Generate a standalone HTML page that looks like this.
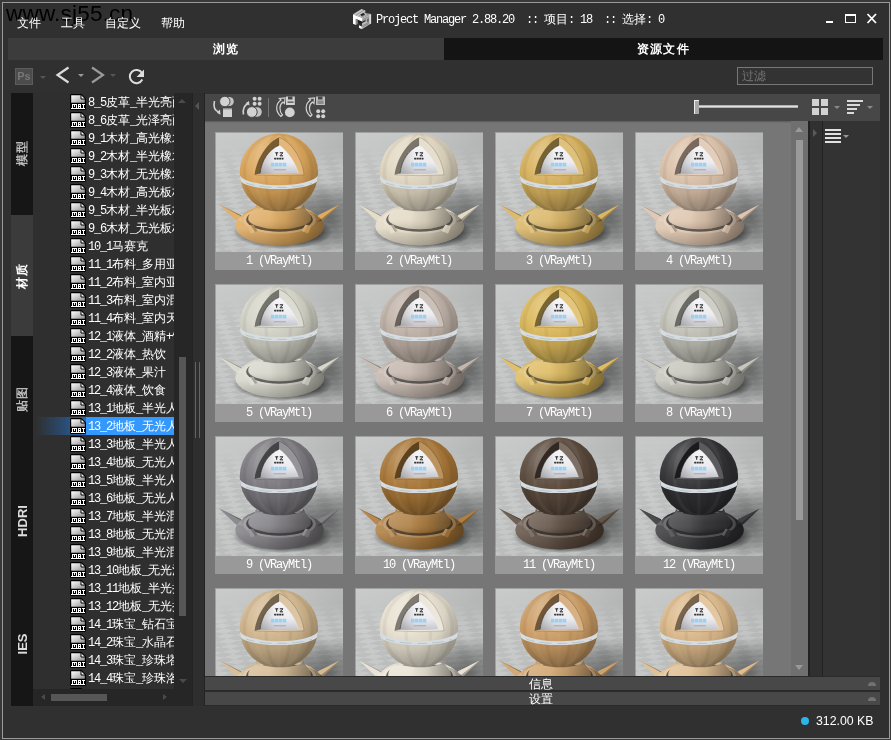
<!DOCTYPE html><html><head><meta charset="utf-8"><title>Project Manager</title><style>
*{margin:0;padding:0;box-sizing:border-box}
html,body{width:891px;height:740px;overflow:hidden;background:#393939}
body{font-family:"Liberation Sans",sans-serif;font-size:12px;color:#fff;position:relative}
.abs,.frame *{position:absolute}
.frame{position:absolute;left:2px;top:2px;width:888px;height:737px;border:1px solid #9a9a9a;background:#303030}
/* inner coordinates are page coords minus 3 -> use wrapper */
.pg{position:absolute;left:-3px;top:-3px;width:891px;height:740px;will-change:transform}
span.l,span.c{position:static}
.l{font-family:"Liberation Mono",monospace;font-size:12px;letter-spacing:-1.2px}
.c{font-family:"Liberation Sans",sans-serif;font-size:12px;letter-spacing:0}
.wm{left:6px;top:1px;font-size:22.5px;letter-spacing:.2px;color:#000;line-height:26px;white-space:nowrap}
.menu{top:16px;height:14px;line-height:14px;font-size:12px;color:#fff;white-space:nowrap}
.title{left:376px;top:11px;height:16px;line-height:16px;white-space:nowrap;color:#fff}
.tab{top:38px;height:22px;line-height:22px;text-align:center;font-weight:bold;font-size:12px;color:#fff;letter-spacing:1.2px}
.row{left:33px;width:141px;height:18px;white-space:nowrap;overflow:hidden}
.row .txt{left:55px;top:0;height:18px;line-height:17px;white-space:nowrap;color:#fff}
.row svg{left:37px;top:0}
.vt{left:11px;width:22px;color:#fff;font-weight:bold;font-size:12px}
.vt span{position:absolute;left:50%;top:50%;white-space:nowrap;transform:translate(-50%,-50%) rotate(-90deg);}
.th{width:128px;height:138px;overflow:hidden}
.th svg{left:0;top:0}
.th .lb{left:0;top:120px;width:128px;height:18px;background:#999;text-align:center;line-height:17px;color:#fff;white-space:nowrap}
</style></head><body>
<div class="frame"><div class="pg">
<div class="wm">www.sj55.cn</div>
<div class="menu" style="left:17px">文件</div>
<div class="menu" style="left:61px">工具</div>
<div class="menu" style="left:105px">自定义</div>
<div class="menu" style="left:161px">帮助</div>
<svg style="left:350px;top:6px" width="26" height="26" viewBox="0 0 740 740"><path d="M85 235 L330 85 L435 125 L435 205 L600 225 L345 340Z" fill="#c6c6c6"/><path d="M160 268 L400 118 M235 298 L440 170 M300 322 L560 215" stroke="#6a6a6a" stroke-width="16" fill="none"/><path d="M295 238 L395 196 L425 248 L330 290Z" fill="#222"/><path d="M345 340 L600 225 L600 495 L335 660 L335 580 L345 500Z" fill="#bcbcbc"/><path d="M365 385 L545 300 M365 425 L470 375 M350 600 L590 480 M350 560 L590 445" stroke="#5a5a5a" stroke-width="15" fill="none"/><path d="M480 372 L540 345 L540 440 L480 467Z" fill="#6a6a6a"/><path d="M552 247 L600 225 L600 495 L552 520Z" fill="#dadada"/><path d="M225 395 L345 445 L445 398 L445 432 L300 505 L225 472Z" fill="#1e1e1e"/><path d="M85 235 L345 340 L345 440 L165 365 L165 540 L85 505Z" fill="#fff"/><path d="M170 368 L220 390 L220 512 L170 538Z" fill="#8c8c8c"/><path d="M255 545 L335 580 L335 660 L255 620Z" fill="#fff"/></svg>
<div class="title"><span class="l">Project&nbsp;Manager&nbsp;2.88.20&nbsp;&nbsp;::&nbsp;</span><span class="c">项目</span><span class="l">:&nbsp;18&nbsp;&nbsp;::&nbsp;</span><span class="c">选择</span><span class="l">:&nbsp;0</span></div>
<div style="left:826px;top:21px;width:7px;height:2px;background:#fff"></div>
<div style="left:845px;top:14px;width:11px;height:9px;border:1.5px solid #fff;border-top-width:2.5px"></div>
<svg style="left:866px;top:13px" width="12" height="11" viewBox="0 0 12 11"><path d="M1.5 1 L10 10 M10 1 L1.5 10" stroke="#fff" stroke-width="1.8" fill="none"/></svg>
<div class="tab" style="left:8px;width:436px;background:#3c3c3c">浏览</div>
<div class="tab" style="left:444px;width:439px;background:#141414">资源文件</div>
<div style="left:15px;top:68px;width:18px;height:17px;background:#4c4c4c;border:1px solid #5c5c5c;color:#777;font-size:11px;line-height:15px;text-align:center;font-weight:bold">Ps</div>
<div style="left:39.5px;top:75.75px;width:0;height:0;border-left:3px solid transparent;border-right:3px solid transparent;border-top:3.5px solid #555"></div>
<svg style="left:54px;top:64px" width="100" height="24" viewBox="54 64 100 24" fill="none"><path d="M68.5 67.5 L57.5 75 L68.5 82.5" stroke="#dcdcdc" stroke-width="2.2"/><path d="M92 67.5 L103 75 L92 82.5" stroke="#9a9a9a" stroke-width="2.2"/><path d="M142 73 A6.6 6.6 0 1 0 142.3 79.5" stroke="#dedede" stroke-width="2"/><path d="M144 69.5 V77 H136.5 Z" fill="#dedede"/></svg>
<div style="left:77.5px;top:73.75px;width:0;height:0;border-left:3px solid transparent;border-right:3px solid transparent;border-top:3.5px solid #999"></div>
<div style="left:109.5px;top:73.75px;width:0;height:0;border-left:3px solid transparent;border-right:3px solid transparent;border-top:3.5px solid #555"></div>
<div style="left:737px;top:67px;width:136px;height:18px;border:1px solid #777;background:#333;color:#777;font-size:12px;line-height:16px;padding-left:4px">过滤</div>
<div style="left:11px;top:93px;width:22px;height:613px;background:#161616"></div>
<div style="left:11px;top:215px;width:22px;height:121px;background:#3b3b3b"></div>
<div class="vt" style="top:91px;height:123px;color:#bbb;letter-spacing:1px"><span>模型</span></div>
<div class="vt" style="top:215px;height:122px;color:#fff;letter-spacing:1px"><span>材质</span></div>
<div class="vt" style="top:338px;height:122px;color:#bbb;letter-spacing:1px"><span>贴图</span></div>
<div class="vt" style="top:460px;height:121px;color:#ddd;font-size:13px"><span>HDRI</span></div>
<div class="vt" style="top:582px;height:123px;color:#ddd;font-size:13px"><span>IES</span></div>
<div style="left:33px;top:93px;width:141px;height:596px;background:#2f2f2f"></div>
<div style="left:33px;top:417px;width:53px;height:18px;background:linear-gradient(90deg,rgba(51,153,255,0) 5%,rgba(38,100,170,0.55) 60%,rgba(38,110,190,0.9) 100%)"></div>
<div style="left:86px;top:417px;width:88px;height:18px;background:#3399ff"></div>
<div class="row" style="top:94px;height:18px"><svg width="16" height="16"><use href="#mat"/></svg><div class="txt"><span class="l">8_5</span><span class="c">皮革</span><span class="l">_</span><span class="c">半光亮面</span></div></div>
<div class="row" style="top:112px;height:18px"><svg width="16" height="16"><use href="#mat"/></svg><div class="txt"><span class="l">8_6</span><span class="c">皮革</span><span class="l">_</span><span class="c">光泽亮面</span></div></div>
<div class="row" style="top:130px;height:18px"><svg width="16" height="16"><use href="#mat"/></svg><div class="txt"><span class="l">9_1</span><span class="c">木材</span><span class="l">_</span><span class="c">高光橡木</span></div></div>
<div class="row" style="top:148px;height:18px"><svg width="16" height="16"><use href="#mat"/></svg><div class="txt"><span class="l">9_2</span><span class="c">木材</span><span class="l">_</span><span class="c">半光橡木</span></div></div>
<div class="row" style="top:166px;height:18px"><svg width="16" height="16"><use href="#mat"/></svg><div class="txt"><span class="l">9_3</span><span class="c">木材</span><span class="l">_</span><span class="c">无光橡木</span></div></div>
<div class="row" style="top:184px;height:18px"><svg width="16" height="16"><use href="#mat"/></svg><div class="txt"><span class="l">9_4</span><span class="c">木材</span><span class="l">_</span><span class="c">高光板材</span></div></div>
<div class="row" style="top:202px;height:18px"><svg width="16" height="16"><use href="#mat"/></svg><div class="txt"><span class="l">9_5</span><span class="c">木材</span><span class="l">_</span><span class="c">半光板材</span></div></div>
<div class="row" style="top:220px;height:18px"><svg width="16" height="16"><use href="#mat"/></svg><div class="txt"><span class="l">9_6</span><span class="c">木材</span><span class="l">_</span><span class="c">无光板材</span></div></div>
<div class="row" style="top:238px;height:18px"><svg width="16" height="16"><use href="#mat"/></svg><div class="txt"><span class="l">10_1</span><span class="c">马赛克</span></div></div>
<div class="row" style="top:256px;height:18px"><svg width="16" height="16"><use href="#mat"/></svg><div class="txt"><span class="l">11_1</span><span class="c">布料</span><span class="l">_</span><span class="c">多用亚麻</span></div></div>
<div class="row" style="top:274px;height:18px"><svg width="16" height="16"><use href="#mat"/></svg><div class="txt"><span class="l">11_2</span><span class="c">布料</span><span class="l">_</span><span class="c">室内亚麻</span></div></div>
<div class="row" style="top:292px;height:18px"><svg width="16" height="16"><use href="#mat"/></svg><div class="txt"><span class="l">11_3</span><span class="c">布料</span><span class="l">_</span><span class="c">室内混纺</span></div></div>
<div class="row" style="top:310px;height:18px"><svg width="16" height="16"><use href="#mat"/></svg><div class="txt"><span class="l">11_4</span><span class="c">布料</span><span class="l">_</span><span class="c">室内天鹅</span></div></div>
<div class="row" style="top:328px;height:18px"><svg width="16" height="16"><use href="#mat"/></svg><div class="txt"><span class="l">12_1</span><span class="c">液体</span><span class="l">_</span><span class="c">酒精</span><span class="l">+</span><span class="c">饮料</span></div></div>
<div class="row" style="top:346px;height:18px"><svg width="16" height="16"><use href="#mat"/></svg><div class="txt"><span class="l">12_2</span><span class="c">液体</span><span class="l">_</span><span class="c">热饮</span></div></div>
<div class="row" style="top:364px;height:18px"><svg width="16" height="16"><use href="#mat"/></svg><div class="txt"><span class="l">12_3</span><span class="c">液体</span><span class="l">_</span><span class="c">果汁</span></div></div>
<div class="row" style="top:382px;height:18px"><svg width="16" height="16"><use href="#mat"/></svg><div class="txt"><span class="l">12_4</span><span class="c">液体</span><span class="l">_</span><span class="c">饮食</span></div></div>
<div class="row" style="top:400px;height:18px"><svg width="16" height="16"><use href="#mat"/></svg><div class="txt"><span class="l">13_1</span><span class="c">地板</span><span class="l">_</span><span class="c">半光人字</span></div></div>
<div class="row" style="top:418px;height:18px"><svg width="16" height="16"><use href="#mat"/></svg><div class="txt"><span class="l">13_2</span><span class="c">地板</span><span class="l">_</span><span class="c">无光人字</span></div></div>
<div class="row" style="top:436px;height:18px"><svg width="16" height="16"><use href="#mat"/></svg><div class="txt"><span class="l">13_3</span><span class="c">地板</span><span class="l">_</span><span class="c">半光人字</span></div></div>
<div class="row" style="top:454px;height:18px"><svg width="16" height="16"><use href="#mat"/></svg><div class="txt"><span class="l">13_4</span><span class="c">地板</span><span class="l">_</span><span class="c">无光人字</span></div></div>
<div class="row" style="top:472px;height:18px"><svg width="16" height="16"><use href="#mat"/></svg><div class="txt"><span class="l">13_5</span><span class="c">地板</span><span class="l">_</span><span class="c">半光人字</span></div></div>
<div class="row" style="top:490px;height:18px"><svg width="16" height="16"><use href="#mat"/></svg><div class="txt"><span class="l">13_6</span><span class="c">地板</span><span class="l">_</span><span class="c">无光人字</span></div></div>
<div class="row" style="top:508px;height:18px"><svg width="16" height="16"><use href="#mat"/></svg><div class="txt"><span class="l">13_7</span><span class="c">地板</span><span class="l">_</span><span class="c">半光混拼</span></div></div>
<div class="row" style="top:526px;height:18px"><svg width="16" height="16"><use href="#mat"/></svg><div class="txt"><span class="l">13_8</span><span class="c">地板</span><span class="l">_</span><span class="c">无光混拼</span></div></div>
<div class="row" style="top:544px;height:18px"><svg width="16" height="16"><use href="#mat"/></svg><div class="txt"><span class="l">13_9</span><span class="c">地板</span><span class="l">_</span><span class="c">半光混拼</span></div></div>
<div class="row" style="top:562px;height:18px"><svg width="16" height="16"><use href="#mat"/></svg><div class="txt"><span class="l">13_10</span><span class="c">地板</span><span class="l">_</span><span class="c">无光混拼</span></div></div>
<div class="row" style="top:580px;height:18px"><svg width="16" height="16"><use href="#mat"/></svg><div class="txt"><span class="l">13_11</span><span class="c">地板</span><span class="l">_</span><span class="c">半光拼花</span></div></div>
<div class="row" style="top:598px;height:18px"><svg width="16" height="16"><use href="#mat"/></svg><div class="txt"><span class="l">13_12</span><span class="c">地板</span><span class="l">_</span><span class="c">无光拼花</span></div></div>
<div class="row" style="top:616px;height:18px"><svg width="16" height="16"><use href="#mat"/></svg><div class="txt"><span class="l">14_1</span><span class="c">珠宝</span><span class="l">_</span><span class="c">钻石宝石</span></div></div>
<div class="row" style="top:634px;height:18px"><svg width="16" height="16"><use href="#mat"/></svg><div class="txt"><span class="l">14_2</span><span class="c">珠宝</span><span class="l">_</span><span class="c">水晶石</span></div></div>
<div class="row" style="top:652px;height:18px"><svg width="16" height="16"><use href="#mat"/></svg><div class="txt"><span class="l">14_3</span><span class="c">珠宝</span><span class="l">_</span><span class="c">珍珠塔</span></div></div>
<div class="row" style="top:670px;height:18px"><svg width="16" height="16"><use href="#mat"/></svg><div class="txt"><span class="l">14_4</span><span class="c">珠宝</span><span class="l">_</span><span class="c">珍珠洛</span></div></div>
<div class="row" style="top:688px;height:1px"><svg width="16" height="16"><use href="#mat"/></svg><div class="txt"><span class="l">14_5</span><span class="c">珠宝</span><span class="l">_</span><span class="c">黄金</span></div></div>
<div style="left:174px;top:93px;width:18px;height:596px;background:#262626"></div>
<div style="left:179px;top:357px;width:7px;height:259px;background:#565656"></div>
<div style="left:178px;top:99px;width:0;height:0;border-left:4px solid transparent;border-right:4px solid transparent;border-bottom:4px solid #4a4a4a"></div>
<div style="left:179px;top:679px;width:0;height:0;border-left:4px solid transparent;border-right:4px solid transparent;border-top:4px solid #4a4a4a"></div>
<div style="left:33px;top:689px;width:159px;height:17px;background:#262626"></div>
<div style="left:51px;top:694px;width:56px;height:7px;background:#565656"></div>
<div style="left:41px;top:694px;width:0;height:0;border-top:3.5px solid transparent;border-bottom:3.5px solid transparent;border-right:4px solid #4a4a4a"></div>
<div style="left:163px;top:694px;width:0;height:0;border-top:3.5px solid transparent;border-bottom:3.5px solid transparent;border-left:4px solid #4a4a4a"></div>
<div style="left:192px;top:93px;width:1px;height:613px;background:#232323"></div>
<div style="left:193px;top:93px;width:11px;height:613px;background:#2e2e2e"></div>
<div style="left:204px;top:93px;width:1px;height:613px;background:#232323"></div>
<div style="left:195px;top:362px;width:1px;height:76px;background:#636363"></div>
<div style="left:199px;top:362px;width:1px;height:76px;background:#636363"></div>
<div style="left:195px;top:102px;width:0;height:0;border-top:4px solid transparent;border-bottom:4px solid transparent;border-right:4px solid #555"></div>
<div style="left:205px;top:94px;width:675px;height:27px;background:#474747"></div>
<div style="left:205px;top:121px;width:603px;height:555px;background:#767676"></div>
<div style="left:205px;top:121px;width:603px;height:2px;background:linear-gradient(#5a5a5a,#767676)"></div>
<div id="tv" style="left:205px;top:123px;width:586px;height:553px;overflow:hidden">
<div class="th" style="left:10px;top:9px"><svg width="128" height="120" viewBox="0 0 128 120" style="--c:#dca65a"><use href="#bg"/><use href="#ball"/></svg><div class="lb"><span class="l">1&nbsp;(VRayMtl)</span></div></div>
<div class="th" style="left:150px;top:9px"><svg width="128" height="120" viewBox="0 0 128 120" style="--c:#e2d8c2"><use href="#bg"/><use href="#ball"/></svg><div class="lb"><span class="l">2&nbsp;(VRayMtl)</span></div></div>
<div class="th" style="left:290px;top:9px"><svg width="128" height="120" viewBox="0 0 128 120" style="--c:#d8b25e"><use href="#bg"/><use href="#ball"/></svg><div class="lb"><span class="l">3&nbsp;(VRayMtl)</span></div></div>
<div class="th" style="left:430px;top:9px"><svg width="128" height="120" viewBox="0 0 128 120" style="--c:#dcc2aa"><use href="#bg"/><use href="#ball"/></svg><div class="lb"><span class="l">4&nbsp;(VRayMtl)</span></div></div>
<div class="th" style="left:10px;top:161px"><svg width="128" height="120" viewBox="0 0 128 120" style="--c:#d4d4c8"><use href="#bg"/><use href="#ball"/></svg><div class="lb"><span class="l">5&nbsp;(VRayMtl)</span></div></div>
<div class="th" style="left:150px;top:161px"><svg width="128" height="120" viewBox="0 0 128 120" style="--c:#c0b2a8"><use href="#bg"/><use href="#ball"/></svg><div class="lb"><span class="l">6&nbsp;(VRayMtl)</span></div></div>
<div class="th" style="left:290px;top:161px"><svg width="128" height="120" viewBox="0 0 128 120" style="--c:#dcb85a"><use href="#bg"/><use href="#ball"/></svg><div class="lb"><span class="l">7&nbsp;(VRayMtl)</span></div></div>
<div class="th" style="left:430px;top:161px"><svg width="128" height="120" viewBox="0 0 128 120" style="--c:#c3c3b9"><use href="#bg"/><use href="#ball"/></svg><div class="lb"><span class="l">8&nbsp;(VRayMtl)</span></div></div>
<div class="th" style="left:10px;top:313px"><svg width="128" height="120" viewBox="0 0 128 120" style="--c:#7c7a7f"><use href="#bg"/><use href="#ball"/></svg><div class="lb"><span class="l">9&nbsp;(VRayMtl)</span></div></div>
<div class="th" style="left:150px;top:313px"><svg width="128" height="120" viewBox="0 0 128 120" style="--c:#aa7838"><use href="#bg"/><use href="#ball"/></svg><div class="lb"><span class="l">10&nbsp;(VRayMtl)</span></div></div>
<div class="th" style="left:290px;top:313px"><svg width="128" height="120" viewBox="0 0 128 120" style="--c:#5c4b3e"><use href="#bg"/><use href="#ball"/></svg><div class="lb"><span class="l">11&nbsp;(VRayMtl)</span></div></div>
<div class="th" style="left:430px;top:313px"><svg width="128" height="120" viewBox="0 0 128 120" style="--c:#323235"><use href="#bg"/><use href="#ball"/></svg><div class="lb"><span class="l">12&nbsp;(VRayMtl)</span></div></div>
<div class="th" style="left:10px;top:465px"><svg width="128" height="120" viewBox="0 0 128 120" style="--c:#d2b78e"><use href="#bg"/><use href="#ball"/></svg><div class="lb"><span class="l">13&nbsp;(VRayMtl)</span></div></div>
<div class="th" style="left:150px;top:465px"><svg width="128" height="120" viewBox="0 0 128 120" style="--c:#e8e1d1"><use href="#bg"/><use href="#ball"/></svg><div class="lb"><span class="l">14&nbsp;(VRayMtl)</span></div></div>
<div class="th" style="left:290px;top:465px"><svg width="128" height="120" viewBox="0 0 128 120" style="--c:#cd9e66"><use href="#bg"/><use href="#ball"/></svg><div class="lb"><span class="l">15&nbsp;(VRayMtl)</span></div></div>
<div class="th" style="left:430px;top:465px"><svg width="128" height="120" viewBox="0 0 128 120" style="--c:#dcb98a"><use href="#bg"/><use href="#ball"/></svg><div class="lb"><span class="l">16&nbsp;(VRayMtl)</span></div></div>
</div>
<div style="left:791px;top:121px;width:17px;height:555px;background:#6f6f6f"></div>
<div style="left:796px;top:140px;width:7px;height:380px;background:#9a9a9a"></div>
<div style="left:795px;top:127px;width:0;height:0;border-left:4.5px solid transparent;border-right:4.5px solid transparent;border-bottom:5px solid #999"></div>
<div style="left:795px;top:665px;width:0;height:0;border-left:4.5px solid transparent;border-right:4.5px solid transparent;border-top:5px solid #999"></div>
<div style="left:808px;top:121px;width:2px;height:555px;background:#222"></div>
<div style="left:810px;top:121px;width:12px;height:555px;background:#303030"></div>
<div style="left:822px;top:121px;width:1px;height:555px;background:#222"></div>
<div style="left:823px;top:121px;width:57px;height:555px;background:#333"></div>
<div style="left:813px;top:129px;width:0;height:0;border-top:4.5px solid transparent;border-bottom:4.5px solid transparent;border-left:4.5px solid #5a5a5a"></div>
<div style="left:825px;top:129px;width:16px;height:2px;background:#e2e2e2"></div>
<div style="left:825px;top:133px;width:16px;height:2px;background:#e2e2e2"></div>
<div style="left:825px;top:137px;width:16px;height:2px;background:#e2e2e2"></div>
<div style="left:825px;top:141px;width:16px;height:2px;background:#e2e2e2"></div>
<div style="left:842.5px;top:134.75px;width:0;height:0;border-left:3px solid transparent;border-right:3px solid transparent;border-top:3.5px solid #999"></div>
<div style="left:812px;top:99px;width:7px;height:7px;background:#d2d2d2"></div>
<div style="left:812px;top:108px;width:7px;height:7px;background:#d2d2d2"></div>
<div style="left:821px;top:99px;width:7px;height:7px;background:#d2d2d2"></div>
<div style="left:821px;top:108px;width:7px;height:7px;background:#d2d2d2"></div>
<div style="left:833.5px;top:105.75px;width:0;height:0;border-left:3px solid transparent;border-right:3px solid transparent;border-top:3.5px solid #8a8a8a"></div>
<div style="left:847px;top:100px;width:16px;height:2px;background:#dadada"></div>
<div style="left:847px;top:104px;width:13px;height:2px;background:#dadada"></div>
<div style="left:847px;top:108px;width:10px;height:2px;background:#dadada"></div>
<div style="left:847px;top:112px;width:7px;height:2px;background:#dadada"></div>
<div style="left:866.5px;top:105.75px;width:0;height:0;border-left:3px solid transparent;border-right:3px solid transparent;border-top:3.5px solid #8a8a8a"></div>
<div style="left:699px;top:105px;width:99px;height:3px;background:linear-gradient(#9a9a9a,#e0e0e0 50%,#9a9a9a)"></div>
<div style="left:694px;top:100px;width:5px;height:14px;background:#a8a8a8;border-left:1px solid #eee;border-top:1px solid #eee"></div>
<svg style="left:205px;top:94px" width="130" height="27" viewBox="205 94 130 27" fill="none">
<g stroke="#d2d2d2" stroke-width="1.6"><path d="M214.5 101 C213 107 215 111 219.5 112.5"/><path d="M243.5 114.5 C242.5 109 244 105.5 248 103.5"/></g>
<path d="M220.5 114.8 L216.8 112.8 L220 109.5Z M249 101 L249.5 105.6 L245.5 103.3Z" fill="#d2d2d2"/>
<circle cx="229.2" cy="101.5" r="4.6" fill="#c4c4c4"/><circle cx="224.8" cy="101.5" r="5.2" fill="#d2d2d2" stroke="#474747" stroke-width="1"/>
<rect x="223" y="108.5" width="9" height="8.5" fill="#d2d2d2"/><path d="M223 108.5 h9 v1.5 h-9z" fill="#9c9c9c" opacity=".5"/>
<g fill="#d2d2d2"><circle cx="254.6" cy="98.8" r="2"/><circle cx="259.6" cy="98.8" r="2"/><circle cx="254.6" cy="103.8" r="2"/><circle cx="259.6" cy="103.8" r="2"/></g>
<circle cx="257" cy="112" r="4.8" fill="#c4c4c4"/><circle cx="251.8" cy="112" r="5.4" fill="#d2d2d2" stroke="#474747" stroke-width="1"/>
<path d="M268.5 98 V117" stroke="#767676" stroke-width="1"/>
<g stroke="#d2d2d2" stroke-width="1.2" transform="translate(-1.5 0)"><path d="M282.5 116.5 C277 112 276.5 104 282.5 100 L281 98.5 L286.5 98 L286 103.5 L284.5 102 C280.5 105 280.5 111 284 115Z"/><path d="M312 116.5 C306.500 112 306 104 312 100 L310.500 98.500 L316 98 L315.500 103.500 L314 102 C310 105 310 111 313.500 115Z"/></g>
<path d="M286 96.500 h8.800 v8.500 h-8.800z" fill="#d2d2d2"/><path d="M288 96.500 h4.500 v3 h-4.500z M287.5 101.5 h6 v1.200 h-6z" fill="#474747"/>
<circle cx="289.800" cy="112.400" r="4.900" fill="#d2d2d2"/>
<path d="M316 96.500 h9 v8.500 h-9z" fill="#bdbdbd"/><path d="M318 96.500 h4.500 v3 h-4.500z" fill="#474747"/><path d="M317.5 100.500 h6 v3.500 h-6z" fill="#8a8a8a"/>
<g fill="#d2d2d2"><circle cx="318.200" cy="111.200" r="2"/><circle cx="323.200" cy="111.200" r="2"/><circle cx="318.200" cy="116.200" r="2"/><circle cx="323.200" cy="116.200" r="2"/></g>
</svg>
<div style="left:205px;top:676px;width:675px;height:30px;background:#2a2a2a"></div>
<div style="left:205px;top:677px;width:675px;height:13px;background:#484848"></div>
<div style="left:205px;top:692px;width:675px;height:13px;background:#484848"></div>
<div style="left:529px;top:677px;height:14px;line-height:14px;font-size:12px;color:#fff;white-space:nowrap">信息</div>
<div style="left:529px;top:692px;height:14px;line-height:14px;font-size:12px;color:#fff;white-space:nowrap">设置</div>
<div style="left:867.5px;top:682px;width:8.5px;height:4px;background:#717171;border-radius:5px 5px 0 0"></div>
<div style="left:867.5px;top:697px;width:8.5px;height:4px;background:#717171;border-radius:5px 5px 0 0"></div>
<div style="left:800.5px;top:716.5px;width:8.5px;height:8.5px;border-radius:50%;background:#2db5e8"></div>
<div style="left:816px;top:714px;height:14px;line-height:14px;font-size:12.3px;color:#fff;white-space:nowrap">312.00 KB</div>
</div></div>
<svg width="0" height="0" style="position:absolute;left:0;top:0"><defs>
<linearGradient id="mg" x1="0" y1="0" x2="1" y2="1"><stop offset="0" stop-color="#fff"/><stop offset=".45" stop-color="#cfcfcf"/><stop offset="1" stop-color="#8c8c8c"/></linearGradient>
<symbol id="mat" viewBox="0 0 16 16"><path d="M1.500 0 H11.500 L16 4.500 V14.500 Q16 16 14.500 16 H1.500 Q0 16 0 14.500 V1.500 Q0 0 1.500 0Z" fill="#000"/><path d="M1.200 1.200 H11 L14.800 5 V8.800 H1.200Z" fill="url(#mg)"/><path d="M11 1.200 L14.800 5 H11Z" fill="#fff"/><path d="M11 1 V5 H15" stroke="#000" stroke-width="1" fill="none"/><g shape-rendering="crispEdges" fill="#fff"><rect x="1" y="14" width="14" height="1"/><rect x="2" y="10" width="5" height="1"/><rect x="2" y="10" width="1" height="4"/><rect x="4" y="10" width="1" height="3"/><rect x="6" y="10" width="1" height="4"/><rect x="8" y="10" width="3" height="1"/><rect x="8" y="10" width="1" height="4"/><rect x="10" y="10" width="1" height="4"/><rect x="8" y="12" width="3" height="1"/><rect x="12" y="10" width="3" height="1"/><rect x="13" y="10" width="1" height="4"/></g></symbol>

<linearGradient id="bgl" x1="0" y1="0" x2="1" y2="0"><stop offset="0" stop-color="#c8caca"/><stop offset=".55" stop-color="#c3c5c5"/><stop offset="1" stop-color="#b4b5b5"/></linearGradient>
<pattern id="chk" width="16" height="16" patternUnits="userSpaceOnUse" patternTransform="matrix(1.35 .22 -1.1 .42 0 20)"><rect width="16" height="16" fill="#b9bbbb"/><rect width="8" height="8" fill="#cdcfcf"/><rect x="8" y="8" width="8" height="8" fill="#cdcfcf"/></pattern>
<linearGradient id="flf" x1="0" y1="0" x2="0" y2="1"><stop offset="0" stop-color="#fff" stop-opacity="0"/><stop offset=".12" stop-color="#fff" stop-opacity="0"/><stop offset=".3" stop-color="#fff" stop-opacity="1"/></linearGradient>
<linearGradient id="bgv" x1="0" y1="0" x2="0" y2="1"><stop offset="0" stop-color="#fff" stop-opacity=".03"/><stop offset=".3" stop-color="#000" stop-opacity="0"/><stop offset="1" stop-color="#000" stop-opacity=".03"/></linearGradient>
<mask id="flm"><rect width="128" height="120" fill="url(#flf)"/></mask>
<radialGradient id="shd" cx=".5" cy=".5" r=".5"><stop offset="0" stop-color="#000" stop-opacity=".46"/><stop offset=".6" stop-color="#000" stop-opacity=".24"/><stop offset="1" stop-color="#000" stop-opacity="0"/></radialGradient>
<radialGradient id="shd2" cx=".5" cy=".5" r=".5"><stop offset="0" stop-color="#000" stop-opacity=".75"/><stop offset=".75" stop-color="#000" stop-opacity=".45"/><stop offset="1" stop-color="#000" stop-opacity="0"/></radialGradient>
<symbol id="bg" viewBox="0 0 128 120"><rect width="128" height="120" fill="url(#bgl)"/><rect width="128" height="120" fill="url(#chk)" opacity=".5" mask="url(#flm)"/><rect width="128" height="120" fill="url(#bgv)"/><ellipse cx="110" cy="86" rx="46" ry="36" fill="url(#shd)"/><ellipse cx="68" cy="100" rx="50" ry="17" fill="url(#shd2)"/><path d="M0 0H128V1H1V120H0Z" fill="#787878" opacity=".5"/></symbol>

<radialGradient id="sph" cx=".36" cy=".3" r=".8" fx=".33" fy=".25"><stop offset="0" stop-color="#fff" stop-opacity=".28"/><stop offset=".35" stop-color="#fff" stop-opacity=".08"/><stop offset=".6" stop-color="#000" stop-opacity=".06"/><stop offset=".85" stop-color="#000" stop-opacity=".26"/><stop offset="1" stop-color="#000" stop-opacity=".42"/></radialGradient>
<linearGradient id="lr" x1="0" y1="0" x2="1" y2="0"><stop offset="0" stop-color="#fff" stop-opacity=".18"/><stop offset=".35" stop-color="#fff" stop-opacity=".1"/><stop offset=".6" stop-color="#000" stop-opacity=".08"/><stop offset="1" stop-color="#000" stop-opacity=".42"/></linearGradient>
<linearGradient id="tb" x1="0" y1="0" x2="0" y2="1"><stop offset="0" stop-color="#000" stop-opacity=".28"/><stop offset=".25" stop-color="#fff" stop-opacity=".1"/><stop offset=".6" stop-color="#fff" stop-opacity=".05"/><stop offset="1" stop-color="#000" stop-opacity=".14"/></linearGradient>
<linearGradient id="inn" x1="0" y1="0" x2="0" y2="1"><stop offset="0" stop-color="#f6f6f8"/><stop offset=".6" stop-color="#ececf0"/><stop offset="1" stop-color="#c4c6cc"/></linearGradient>
<linearGradient id="rb" x1="0" y1="0" x2="0" y2="1"><stop offset=".55" stop-color="#000" stop-opacity="0"/><stop offset="1" stop-color="#000" stop-opacity=".22"/></linearGradient>
<linearGradient id="inl" x1="0" y1="0" x2="1" y2="0"><stop offset="0" stop-color="#000" stop-opacity=".18"/><stop offset=".4" stop-color="#000" stop-opacity="0"/></linearGradient>
<clipPath id="sc"><circle cx="62.900" cy="39.800" r="39.200"/></clipPath>
<symbol id="ball" viewBox="0 0 128 120"><g transform="translate(1 1)">
<g style="fill:var(--c)">
<path d="M3.200 71.400 L25 82.300 L27 89 L20 87.600Z"/><path d="M123.600 71.400 L102 82.300 L100 89 L107 87.600Z"/>
<ellipse cx="63.600" cy="93" rx="44.300" ry="19.500"/><ellipse cx="63.200" cy="86" rx="38" ry="14.500"/>
</g>
<path d="M3.200 71.400 L25 82.300 L27 89 L20 87.600Z" fill="#fff" opacity=".12"/><path d="M3.200 71.400 L25 82.300 L25.300 83.500Z" fill="#000" opacity=".35"/>
<path d="M123.600 71.400 L102 82.300 L100 89 L107 87.600Z" fill="#fff" opacity=".06"/><path d="M123.600 71.400 L107 87.600 L100 89 L105.500 85.800Z" fill="#000" opacity=".3"/>
<ellipse cx="63.600" cy="93" rx="44.300" ry="19.500" fill="url(#lr)"/>
<ellipse cx="63.600" cy="93" rx="44.300" ry="19.500" fill="url(#rb)"/>
<ellipse cx="63.500" cy="86.900" rx="36.500" ry="13.900" fill="#fff" opacity=".18"/>
<ellipse cx="63.500" cy="86.700" rx="33.400" ry="12" fill="#000" opacity=".55"/>
<circle cx="62.900" cy="39.800" r="39.200" style="fill:var(--c)"/>
<circle cx="62.900" cy="39.800" r="39.200" fill="url(#sph)"/>
<g clip-path="url(#sc)" fill="none" stroke-width="3.500"><path d="M62.900 .600 A34.5 39.200 0 0 0 62.900 79" stroke="#000" stroke-opacity="0.049"/><path d="M62.900 .600 A24.3 39.200 0 0 0 62.900 79" stroke="#fff" stroke-opacity="0.049"/><path d="M62.900 .600 A12.9 39.200 0 0 0 62.900 79" stroke="#000" stroke-opacity="0.042"/><path d="M62.900 .600 V79" stroke="#fff" stroke-opacity="0.035"/><path d="M62.900 .600 A11.8 39.200 0 0 1 62.900 79" stroke="#000" stroke-opacity="0.049"/><path d="M62.900 .600 A22.7 39.200 0 0 1 62.900 79" stroke="#fff" stroke-opacity="0.042"/><path d="M62.900 .600 A33.3 39.200 0 0 1 62.900 79" stroke="#000" stroke-opacity="0.049"/></g>
<g clip-path="url(#sc)"><path d="M20 44 A42.900 11.500 0 0 0 106 44.500 V90 H20Z" fill="#000" opacity=".07"/></g>
<g style="fill:var(--c)"><path d="M40 71.300 A24 7 0 0 0 88 71.300 C88 78 94.800 79 94.800 85.700 A31.300 10.500 0 0 1 32.200 85.700 C32.200 79 40 78 40 71.300Z"/>
<path d="M31.500 93.500 L37 91.500 L41.500 98 L35 100.500Z"/><path d="M95 93.500 L89.500 91.500 L85.500 98 L92 100.500Z"/></g>
<path d="M40 71.300 A24 7 0 0 0 88 71.300 C88 78 94.800 79 94.800 85.700 A31.300 10.500 0 0 1 32.200 85.700 C32.200 79 40 78 40 71.300Z" fill="url(#lr)"/>
<path d="M40 71.300 A24 7 0 0 0 88 71.300 C88 78 94.800 79 94.800 85.700 A31.300 10.500 0 0 1 32.200 85.700 C32.200 79 40 78 40 71.300Z" fill="url(#tb)"/>
<path d="M31.500 93.500 L37 91.500 L41.500 98 L35 100.500Z" fill="#fff" opacity=".22"/><path d="M37 91.500 L41.500 98 L39 99 L34.800 92.300Z" fill="#000" opacity=".25"/>
<path d="M95 93.500 L89.500 91.500 L85.500 98 L92 100.500Z" fill="#000" opacity=".1"/><path d="M89.500 91.500 L85.500 98 L88 99 L91.800 92.300Z" fill="#fff" opacity=".22"/>
<path d="M63.100 4.400 C74 8 86 24 88 41.800 Q63 43.600 38.600 41.800 C41 24 53 8 63.100 4.400Z" style="fill:var(--c)"/>
<path d="M63.100 4.400 C53 8 41 24 38.600 41.800 L44 40.500 C45.500 27 53 16.500 63.100 12.300Z" fill="#000" opacity=".45"/>
<path d="M63.100 4.400 C74 8 86 24 88 41.800 L82.500 40 C78.500 27 69.500 16.500 63.100 12.300Z" fill="#fff" opacity=".2"/>
<path d="M38.600 41.800 Q63 43.600 88 41.800 L82.500 40 Q63 41.800 44 40.500Z" fill="#fff" opacity=".25"/>
<path d="M63.100 12.300 C69.500 16.500 78.500 27 82.500 40 Q63 41.800 44 40.500 C45.500 27 53 16.500 63.100 12.300Z" fill="url(#inn)"/>
<path d="M63.100 12.300 C69.500 16.500 78.500 27 82.500 40 Q63 41.800 44 40.500 C45.500 27 53 16.500 63.100 12.300Z" fill="url(#inl)"/>
<path d="M44 40.500 C45.500 27 53 16.500 63.100 12.300" fill="none" stroke="#000" stroke-opacity=".55" stroke-width=".9"/><path d="M63.100 4.400 C74 8 86 24 88 41.800 Q63 43.600 38.600 41.800" fill="none" stroke="#000" stroke-opacity=".22" stroke-width=".8"/><path d="M63.100 12.300 C69.500 16.500 78.500 27 82.500 40" fill="none" stroke="#fff" stroke-opacity=".35" stroke-width=".8"/>
<path d="M59.200 19.800 h3 M63.800 19.800 h3.200 M60.700 19.800 v3 M64 22.700 l2.800 -2.800 M64 22.800 h3" stroke="#222" stroke-width="1" fill="none"/>
<path d="M58.200 25.600 h9.300" stroke="#333" stroke-width="1.800" stroke-dasharray="2 .5"/>
<path d="M55 31.600 h15.800" stroke="#9ad0f2" stroke-width="3.800" stroke-dasharray="3.400 .5"/>
<path d="M57.800 36.800 h12" stroke="#9a9aa0" stroke-width=".8"/>
<g clip-path="url(#sc)"><path d="M23 39.800 A39.900 12 0 0 0 102.800 40.600 L102.800 45.600 A39.900 10.800 0 0 1 23 45Z" fill="#d6dce1"/><path d="M30 50 A40 10 0 0 0 96 50.300" fill="none" stroke="#8aa" stroke-width=".7" stroke-dasharray="9 5 12 6" opacity=".6"/></g>
</g></symbol>
</defs></svg>

</body></html>
